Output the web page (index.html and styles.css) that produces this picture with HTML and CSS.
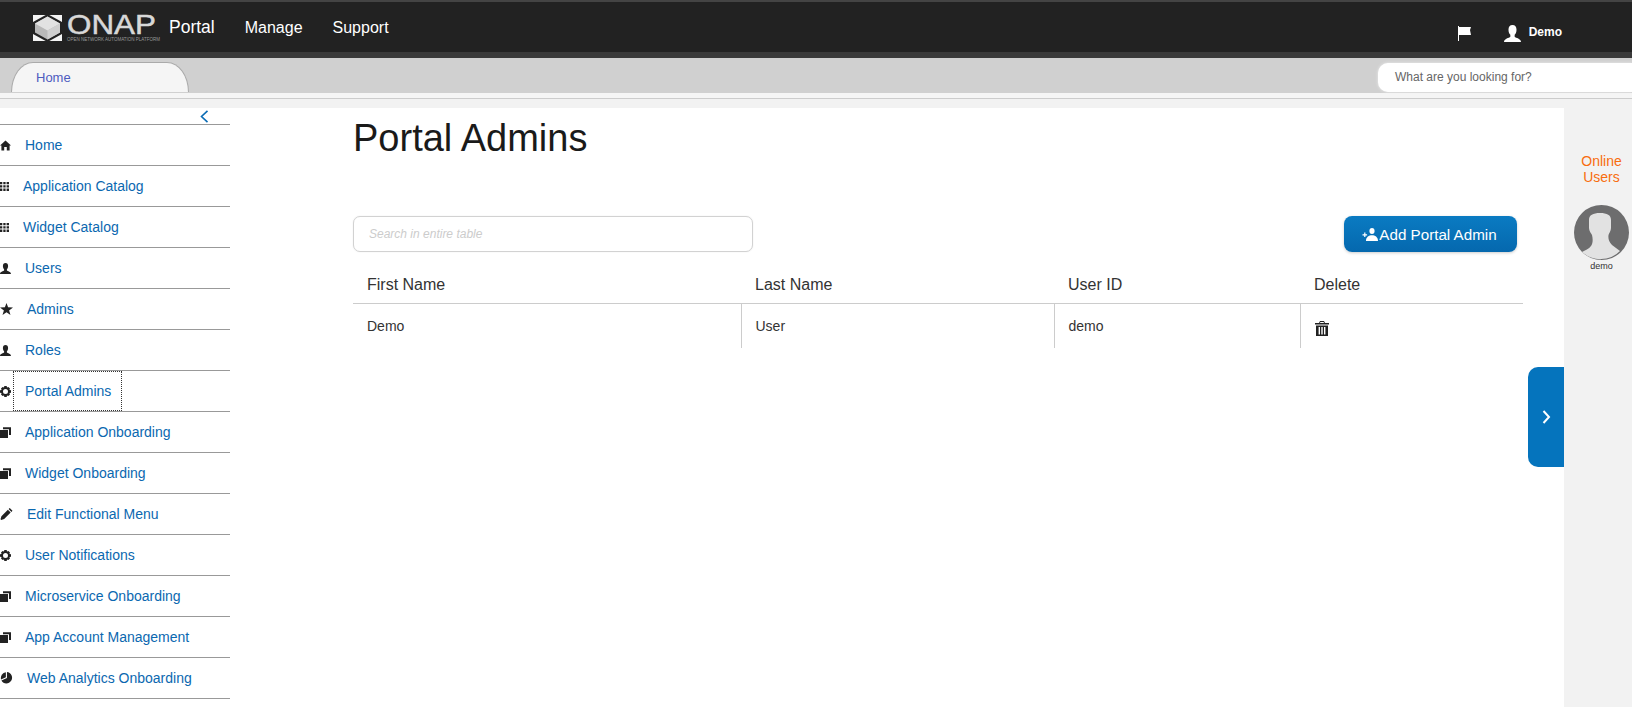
FILE: index.html
```html
<!DOCTYPE html>
<html lang="en">
  <head>
    <meta charset="UTF-8" />
    <title>ONAP Portal</title>
    <link rel="stylesheet" href="styles.css">
  </head>
  <body>
    <svg class="sprite" xmlns="http://www.w3.org/2000/svg">
      <symbol id="i-home" viewBox="0 0 11 11"><path d="M5.500 0.500 11 5.600 9.600 5.600 9.600 10.500 6.800 10.500 6.800 7 4.200 7 4.200 10.500 1.400 10.500 1.400 5.600 0 5.600z"/></symbol>
      <symbol id="i-grid" viewBox="0 0 9 9"><path d="M0 0h2.300v2.300H0zM3.300 0h2.300v2.300H3.300zM6.600 0h2.400v2.300H6.600zM0 3.300h2.300v2.300H0zM3.300 3.300h2.300v2.300H3.300zM6.600 3.300h2.400v2.300H6.600zM0 6.600h2.300V9H0zM3.300 6.600h2.300V9H3.300zM6.600 6.600h2.400V9H6.600z"/></symbol>
      <symbol id="i-user" viewBox="0 0 11 11"><path d="M5.500 0C7.200 0 8.100 1.200 8.100 3 8.100 4.600 7.500 5.700 6.900 6.300V7.600C7.600 8.500 11 8.700 11 11H0C0 8.700 3.400 8.500 4.100 7.600V6.300C3.500 5.700 2.900 4.600 2.900 3 2.900 1.200 3.800 0 5.500 0z"/></symbol>
      <symbol id="i-star" viewBox="0 0 13 12"><path d="M6.500 0 8.100 4.300 13 4.500 9.100 7.400 10.500 12 6.500 9.300 2.500 12 3.900 7.400 0 4.500 4.900 4.300z"/></symbol>
      <symbol id="i-gear" viewBox="0 0 11 11"><path fill-rule="evenodd" d="M4.300 0H6.700L7 1.600 8.400 1 10 2.600 9.400 4 11 4.300V6.700L9.400 7 10 8.400 8.400 10 7 9.400 6.700 11H4.300L4 9.400 2.600 10 1 8.400 1.600 7 0 6.700V4.300L1.600 4 1 2.600 2.600 1 4 1.600zM5.500 3A2.500 2.500 0 1 0 5.500 8 2.500 2.500 0 1 0 5.500 3z"/></symbol>
      <symbol id="i-copy" viewBox="0 0 11 11"><path d="M0 3h8v8H0z"/><path d="M3 0.300h8v7.700H9V2.200H3z"/></symbol>
      <symbol id="i-pencil" viewBox="0 0 13 13"><path d="M10 0 13 3 11.800 4.200 8.800 1.200zM8 2 11 5 4 12 0.800 13 0 12.200 1 9z"/></symbol>
      <symbol id="i-pie" viewBox="0 0 13 13"><path d="M7 0A6.200 6.200 0 1 1 1 9.300L7 6.500z"/><path d="M5.800 0.300V5.600L0.600 8A6.200 6.200 0 0 1 5.800 0.300z"/></symbol>
    </svg>

    <div class="topbar">
      <div class="logo">
        <svg class="logo-mark" viewBox="0 0 29 26">
          <path fill="#f4f4f4" d="M0 0H29V26H0z"/>
          <path fill="#222" d="M14.500 -1 30 7.500V18.500L14.500 27 -1 18.500V7.500z"/>
          <path fill="#b8b8b8" d="M14.500 1.500 27 8.500V17.500L14.500 24.500 2 17.500V8.500z"/>
          <path fill="#e2e2e2" d="M14.500 1.500 27 8.500 14.500 15.500 2 8.500z"/>
          <path fill="#cfcfcf" d="M14.500 15.500 27 8.500V17.500L14.500 24.500z"/>
        </svg>
        <div class="logo-words">
          <span class="logo-name">ONAP</span>
          <span class="logo-sub">OPEN NETWORK AUTOMATION PLATFORM</span>
        </div>
      </div>
      <nav class="topnav">
        <a class="topnav-current">Portal</a>
        <a>Manage</a>
        <a>Support</a>
      </nav>
      <div class="topright">
        <svg class="flag" viewBox="0 0 13 15"><path fill="#fff" d="M0 0H1V15H0zM1 1H13L12 4 13 9H1z"/></svg>
        <svg class="who"><use href="#i-user" fill="#fff"/></svg>
        <span class="who-name">Demo</span>
      </div>
    </div>

    <div class="tabbar">
      <div class="tab">Home</div>
      <div class="lookup">What are you looking for?</div>
    </div>

    <div class="page">
      <aside class="side">
        <div class="side-toggle">
          <svg viewBox="0 0 9 13"><path fill="none" stroke="#0b6cb5" stroke-width="1.6" d="M7.500 0.800 1.500 6.500 7.500 12.200"/></svg>
        </div>
        <ul class="menu">
          <li><svg class="w11"><use href="#i-home"/></svg><a>Home</a></li>
          <li><svg class="w9"><use href="#i-grid"/></svg><a>Application Catalog</a></li>
          <li><svg class="w9"><use href="#i-grid"/></svg><a>Widget Catalog</a></li>
          <li><svg class="w11"><use href="#i-user"/></svg><a>Users</a></li>
          <li><svg class="w13"><use href="#i-star"/></svg><a>Admins</a></li>
          <li><svg class="w11"><use href="#i-user"/></svg><a>Roles</a></li>
          <li><svg class="w11"><use href="#i-gear"/></svg><a class="focused">Portal Admins</a></li>
          <li><svg class="w11"><use href="#i-copy"/></svg><a>Application Onboarding</a></li>
          <li><svg class="w11"><use href="#i-copy"/></svg><a>Widget Onboarding</a></li>
          <li><svg class="w13"><use href="#i-pencil"/></svg><a>Edit Functional Menu</a></li>
          <li><svg class="w11"><use href="#i-gear"/></svg><a>User Notifications</a></li>
          <li><svg class="w11"><use href="#i-copy"/></svg><a>Microservice Onboarding</a></li>
          <li><svg class="w11"><use href="#i-copy"/></svg><a>App Account Management</a></li>
          <li><svg class="w13"><use href="#i-pie"/></svg><a>Web Analytics Onboarding</a></li>
        </ul>
      </aside>

      <main class="content">
        <h1>Portal Admins</h1>
        <div class="tools">
          <input class="search" type="text" placeholder="Search in entire table" />
          <button class="add-btn">
            <svg viewBox="0 0 16 13"><path fill="#fff" d="M10 0C11.700 0 12.600 1.300 12.600 3 12.600 4.700 11.700 6 10 6 8.300 6 7.400 4.700 7.400 3 7.400 1.300 8.300 0 10 0zM4 13C4 9 7 7.300 10 7.300 13 7.300 16 9 16 13zM2.200 4.500H3.400V6.200H5.100V7.400H3.400V9.100H2.200V7.400H0.500V6.200H2.200z"/></svg>
            Add Portal Admin
          </button>
        </div>
        <table class="grid">
          <thead>
            <tr>
              <th class="col-first">First Name</th>
              <th class="col-last">Last Name</th>
              <th class="col-id">User ID</th>
              <th class="col-del">Delete</th>
            </tr>
          </thead>
          <tbody>
            <tr>
              <td>Demo</td>
              <td>User</td>
              <td>demo</td>
              <td>
                <svg class="trash" viewBox="0 0 14 15"><path fill="#222" fill-rule="evenodd" d="M5 0H9L10 2H14V3.500H0V2H4zM5.400 1 5 2H9L8.600 1zM1 4.500H13V15H1zM3.600 6V13.500H5V6zM6.300 6V13.500H7.700V6zM9 6V13.500H10.400V6z"/></svg>
              </td>
            </tr>
          </tbody>
        </table>
        <button class="drawer-tab">
          <svg viewBox="0 0 9 14"><path fill="none" stroke="#fff" stroke-width="2" d="M1.500 1 7 7 1.500 13"/></svg>
        </button>
      </main>

      <aside class="online">
        <div class="online-title">Online Users</div>
        <svg class="avatar" viewBox="0 0 55 55">
          <circle cx="27.500" cy="27.500" r="27.500" fill="#6d6d6e"/>
          <path fill="#e2e2e2" d="M26 8C33 8 37 10 37 15V23C37 26 35 28 34.500 30 34 34 35 37 38 40L46 46A27.500 27.500 0 0 1 8 47C11 45 15 44 17 41 19 38 19 34 18 30 17 28 15 26 15 23V15C15 10 19 8 26 8z"/>
        </svg>
        <div class="avatar-name">demo</div>
      </aside>
    </div>
  </body>
</html>
```
FILE: styles.css
```css
* {
  padding: 0;
  margin: 0;
  box-sizing: border-box;
}
html,
body {
  height: 707px;
  overflow: hidden;
}
body {
  background-color: #f2f2f2;
  font-family: "Liberation Sans", Arial, sans-serif;
  color: #222;
}
.sprite {
  display: none;
}

/* top bar */
.topbar {
  display: flex;
  align-items: center;
  height: 58px;
  padding: 1px 0 0 33px;
  background-color: #222;
  border-top: 2px solid #444;
  border-bottom: 6px solid #3a3a3a;
}
.logo {
  display: flex;
  align-items: center;
  gap: 5px;
  width: 136px;
}
.logo-mark {
  width: 29px;
  height: 26px;
}
.logo-words {
  display: flex;
  flex-direction: column;
}
.logo-name {
  font-size: 28px;
  line-height: 22px;
  color: #d8d8d8;
  -webkit-text-stroke: 0.5px #d8d8d8;
  transform: scaleX(1.12);
  transform-origin: left;
}
.logo-sub {
  margin-top: 1px;
  font-size: 4.5px;
  line-height: 5px;
  color: #999;
  white-space: nowrap;
}
.topnav {
  display: flex;
  align-items: center;
  gap: 30px;
  font-size: 16px;
  color: #fff;
}
.topnav-current {
  font-size: 17.5px;
}
.topright {
  display: flex;
  align-items: center;
  margin: 8px 0 0 auto;
  padding-right: 70px;
  color: #fff;
}
.flag {
  width: 13px;
  height: 15px;
  margin-top: 4px;
}
.who {
  width: 17px;
  height: 17px;
  margin: 3px 0 0 33px;
}
.who-name {
  margin-left: 8px;
  font-size: 12px;
  font-weight: 700;
}

/* tab row */
.tabbar {
  display: flex;
  align-items: flex-end;
  justify-content: space-between;
  height: 41px;
  padding: 5px 0 6px 11px;
  background-color: #f5f5f5;
  border-bottom: 1px solid #ccc;
  background-image: linear-gradient(#d0d0d0 0, #d0d0d0 35px, transparent 35px);
}
.tab {
  width: 178px;
  height: 30px;
  padding: 7px 0 0 24px;
  background-color: #f5f5f5;
  border: 1px solid #aaa;
  border-bottom: none;
  border-radius: 22px 22px 0 0 / 30px 30px 0 0;
  font-size: 13px;
  color: #4d5bbf;
}
.lookup {
  width: 254px;
  height: 29px;
  padding: 7px 0 0 17px;
  background-color: #fff;
  border-radius: 10px 0 0 10px;
  box-shadow: 0 0 3px #eee;
  font-size: 12px;
  color: #666;
}

/* page */
.page {
  display: flex;
  height: 608px;
  margin-top: 9px;
}
.side {
  flex: none;
  width: 230px;
  background-color: #fff;
}
.side-toggle {
  display: flex;
  justify-content: flex-end;
  height: 16px;
  padding: 2px 21px 0 0;
}
.side-toggle svg {
  width: 9px;
  height: 13px;
}
.menu {
  list-style: none;
  border-top: 1px solid #999;
}
.menu li {
  display: flex;
  align-items: center;
  height: 41px;
  border-bottom: 1px solid #999;
}
.menu svg {
  flex: none;
  height: 11px;
  fill: #222;
}
.menu .w9 {
  width: 9px;
  height: 9px;
}
.menu .w11 {
  width: 11px;
}
.menu .w13 {
  width: 13px;
  height: 12px;
}
.menu a {
  display: flex;
  align-items: center;
  height: 40px;
  margin-left: 2px;
  padding: 0 11px 0 12px;
  font-size: 14px;
  color: #0b68b0;
}
.menu .focused {
  outline: 1px dotted #333;
  outline-offset: -1px;
}

.content {
  position: relative;
  flex: 1;
  padding-left: 123px;
  background-color: #fff;
}
h1 {
  height: 108px;
  padding-top: 9px;
  font-size: 38px;
  font-weight: 400;
  color: #1a1a1a;
}
.tools {
  display: flex;
  justify-content: space-between;
  width: 1164px;
}
.search {
  width: 400px;
  height: 36px;
  padding-left: 15px;
  border: 1px solid #d2d2d2;
  border-radius: 7px;
  box-shadow: 0 0 2px #eee;
  font-family: inherit;
  font-size: 12px;
}
.search::placeholder {
  font-style: italic;
  color: #ccc;
}
.add-btn {
  display: flex;
  align-items: center;
  justify-content: center;
  gap: 1px;
  width: 173px;
  height: 36px;
  padding-right: 2px;
  background: linear-gradient(#0a7bc2, #0568ae);
  border: none;
  border-radius: 8px;
  box-shadow: 0 1px 3px #ccc;
  font-family: inherit;
  font-size: 15.2px;
  color: #fff;
}
.add-btn svg {
  width: 16px;
  height: 13px;
}

.grid {
  width: 1170px;
  margin-top: 9px;
  border-collapse: collapse;
  table-layout: fixed;
}
.grid th {
  height: 42px;
  padding: 7px 0 0 14px;
  border-bottom: 1px solid #ccc;
  font-size: 16px;
  font-weight: 400;
  text-align: left;
  color: #333;
}
.col-first {
  width: 388px;
}
.col-last {
  width: 313px;
}
.col-id {
  width: 246px;
}
.grid td {
  height: 45px;
  padding-left: 14px;
  font-size: 14px;
  color: #333;
}
.grid td + td {
  border-left: 1px solid #ccc;
}
.trash {
  display: block;
  width: 14px;
  height: 15px;
  margin-top: 5px;
}

/* sits over the edge of the content */
.drawer-tab {
  position: absolute;
  top: 259px;
  right: 0;
  display: flex;
  align-items: center;
  justify-content: center;
  width: 36px;
  height: 100px;
  background-color: #0574bd;
  border: none;
  border-radius: 10px 0 0 10px;
}
.drawer-tab svg {
  width: 9px;
  height: 14px;
}

.online {
  flex: none;
  width: 68px;
  padding-top: 45px;
  text-align: center;
}
.online-title {
  padding-left: 7px;
  font-size: 14px;
  line-height: 16px;
  color: #f86d0e;
}
.avatar {
  display: block;
  width: 55px;
  height: 55px;
  margin: 20px 0 0 10px;
}
.avatar-name {
  margin-top: 1px;
  padding-left: 7px;
  font-size: 9px;
  color: #333;
}
```
